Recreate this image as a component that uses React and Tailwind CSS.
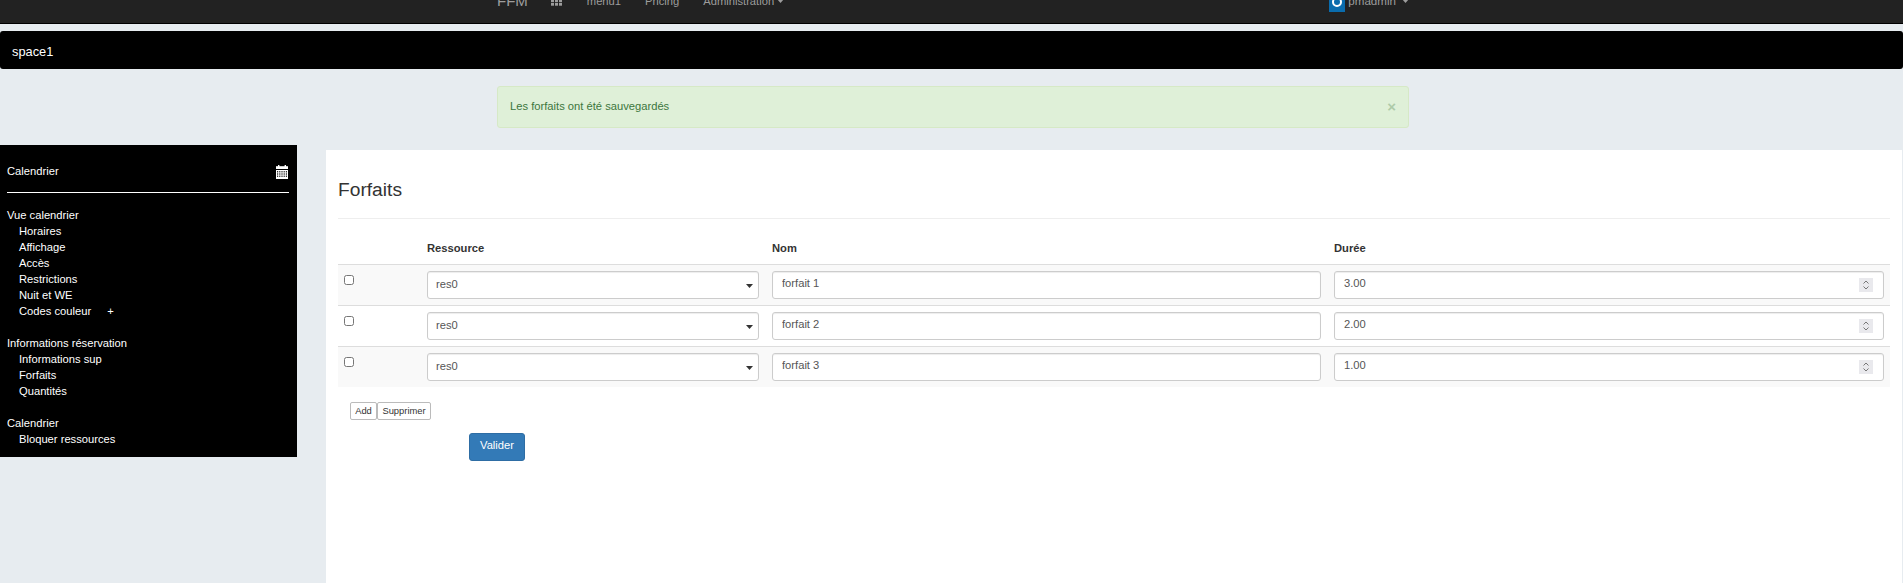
import React from "react";

const font = { fontFamily: '"Liberation Sans", Arial, sans-serif' };

function Caret({ className = "" }) {
  return (
    <svg width="7" height="4" viewBox="0 0 7 4" className={className}>
      <path d="M0 0h7L3.5 4z" fill="currentColor" />
    </svg>
  );
}

function Grid() {
  return (
    <svg width="11" height="10" viewBox="0 0 11 10" fill="#9d9d9d">
      {[0, 4, 8].map((x) =>
        [0, 3.5, 7].map((y) => <rect key={`${x}-${y}`} x={x} y={y} width="3" height="2.7" />)
      )}
    </svg>
  );
}

function CalendarIcon() {
  return (
    <svg width="12" height="14" viewBox="0 0 12 14" fill="#fff">
      <rect x="2" y="0" width="1.4" height="2.5" />
      <rect x="8.6" y="0" width="1.4" height="2.5" />
      <rect x="0" y="1.2" width="12" height="2.8" />
      <path fillRule="evenodd" d="M0 5h12v9H0z" />
      <g fill="#000">
        {[6.2, 8.4, 10.6].map((y) =>
          [1, 3.2, 5.4, 7.6, 9.8].map((x) => <rect key={`${x}-${y}`} x={x} y={y} width="1.2" height="1.2" />)
        )}
      </g>
    </svg>
  );
}

function Spinner() {
  return (
    <span className="absolute right-[11px] top-[7px] flex h-[14px] w-[14px] flex-col items-center justify-center gap-[2px] bg-[#e9e9ed]">
      <svg width="6" height="4" viewBox="0 0 6 4" fill="none" stroke="#777" strokeWidth="1">
        <path d="M.5 3.5 3 1l2.5 2.5" />
      </svg>
      <svg width="6" height="4" viewBox="0 0 6 4" fill="none" stroke="#777" strokeWidth="1">
        <path d="M.5.5 3 3 5.500.5" />
      </svg>
    </span>
  );
}

const inputCls =
  "h-[28px] w-full rounded-[3px] border border-[#ccc] bg-white pb-[3px] pl-[9px] pr-[10px] text-[11.2px] text-[#555] shadow-[inset_0_1px_1px_rgba(0,0,0,0.075)] outline-none";

const rows = [
  { nom: "forfait 1", duree: "3.00", bg: "bg-[#f9f9f9]" },
  { nom: "forfait 2", duree: "2.00", bg: "bg-white" },
  { nom: "forfait 3", duree: "1.00", bg: "bg-[#f9f9f9]" },
];

function SideGroup({ title, items, className = "" }) {
  return (
    <div className={className}>
      <div className="h-4 leading-4">{title}</div>
      {items.map((it) => (
        <div key={it} className="h-4 pl-3 leading-4">
          {it === "Codes couleur" ? (
            <span className="flex">
              <span>Codes couleur</span>
              <span className="ml-[16px]">+</span>
            </span>
          ) : (
            it
          )}
        </div>
      ))}
    </div>
  );
}

export default function App() {
  return (
    <div style={font} className="flex h-[583px] flex-col overflow-hidden bg-[#e7ecf0] text-[11.2px] text-[#333]">
      <nav className="h-[24px] shrink-0 overflow-hidden border-b border-black bg-[#222]">
        <div className="-mt-[6px] ml-[497px] flex h-[14px] w-[912px] items-center text-[#9d9d9d]">
          <span className="text-[15px]">FFM</span>
          <span className="ml-[23px]">
            <Grid />
          </span>
          <span className="ml-[25px]">menu1</span>
          <span className="ml-[24px]">Pricing</span>
          <span className="ml-[24px] flex items-center gap-[3px]">
            Administration
            <Caret />
          </span>
          <span className="ml-auto flex items-center">
            <span className="mt-[6px] flex h-[16px] w-[16px] items-start justify-center bg-[#0a6cad] pt-[1px]">
              <span className="h-[10px] w-[10px] rounded-full border-[2px] border-white" />
            </span>
            <span className="ml-[3px] text-[11.6px]">pmadmin</span>
            <Caret className="ml-[6px]" />
          </span>
        </div>
      </nav>

      <div className="mt-[7px] flex h-[38px] shrink-0 items-center rounded-[3px] bg-black pl-3 pt-[4px] text-[12.8px] text-white">
        space1
      </div>

      <div className="ml-[497px] mt-[17px] flex h-[42px] w-[912px] shrink-0 items-center justify-between rounded-[3px] border border-[#d6e9c6] bg-[#dff0d8] pb-[1px] pl-[12px] pr-3 text-[#3c763d]">
        <span>Les forfaits ont été sauvegardés</span>
        <span className="text-[15px] font-bold leading-none text-[#3c763d] opacity-30">×</span>
      </div>

      <div className="mt-[17px] flex min-h-0 flex-1 items-start">
        <aside className="h-[312px] w-[297px] shrink-0 bg-black pl-[7px] pr-[8px] text-white">
          <div className="flex h-[48px] items-center justify-between border-b border-white pr-[1px] pt-[6px]">
            <span>Calendrier</span>
            <CalendarIcon />
          </div>
          <SideGroup
            className="mt-[14px]"
            title="Vue calendrier"
            items={["Horaires", "Affichage", "Accès", "Restrictions", "Nuit et WE", "Codes couleur"]}
          />
          <SideGroup
            className="mt-4"
            title="Informations réservation"
            items={["Informations sup", "Forfaits", "Quantités"]}
          />
          <SideGroup className="mt-4" title="Calendrier" items={["Bloquer ressources"]} />
        </aside>

        <main className="ml-[29px] mt-[5px] h-[434px] w-[1576px] shrink-0 bg-white pl-3 pr-3">
          <h3 className="flex h-[69px] items-end border-b border-[#eee] pb-[17px] text-[19.2px] font-normal leading-[22px] text-[#333]">
            Forfaits
          </h3>
          <table className="w-[1552px] table-fixed border-collapse">
            <colgroup>
              <col className="w-[82.5px]" />
              <col className="w-[345px]" />
              <col className="w-[562px]" />
              <col className="w-[562.5px]" />
            </colgroup>
            <thead>
              <tr className="h-[45px] border-b border-[#ddd] text-left font-bold">
                <th />
                <th className="px-[6.5px] pt-[14px]">Ressource</th>
                <th className="px-[6.5px] pt-[14px]">Nom</th>
                <th className="px-[6.5px] pt-[14px]">Durée</th>
              </tr>
            </thead>
            <tbody>
              {rows.map((r) => (
                <tr key={r.nom} className={`h-[41px] border-t border-[#ddd] first:border-t-0 ${r.bg}`}>
                  <td className="px-[6px] pb-[10px] align-middle">
                    <input type="checkbox" className="block h-[10px] w-[10px]" />
                  </td>
                  <td className="px-[6.5px] align-middle">
                    <div className="relative">
                      <select defaultValue="res0" className={inputCls + " block appearance-none !pb-0 !pl-[8px]"}>
                        <option>res0</option>
                      </select>
                      <Caret className="pointer-events-none absolute right-[6px] top-[13px] text-[#333]" />
                    </div>
                  </td>
                  <td className="px-[6.5px] align-middle">
                    <input type="text" defaultValue={r.nom} className={inputCls + " block"} />
                  </td>
                  <td className="px-[6.5px] align-middle">
                    <div className="relative">
                      <input type="text" defaultValue={r.duree} className={inputCls + " block"} />
                      <Spinner />
                    </div>
                  </td>
                </tr>
              ))}
            </tbody>
          </table>
          <div className="ml-[12px] mt-[15px] flex">
            <button className="h-[18px] w-[27px] rounded-[2px] border border-[#bbb] bg-white text-[9.4px] leading-[14px] text-[#333]">
              Add
            </button>
            <button className="h-[18px] w-[54px] rounded-[2px] border border-[#bbb] bg-white text-[9.4px] leading-[14px] text-[#333]">
              Supprimer
            </button>
          </div>
          <button className="ml-[131px] mt-[13px] block h-[28px] w-[56px] rounded-[3px] border border-[#2e6da4] bg-[#337ab7] pb-[3px] text-[11.2px] text-white">
            Valider
          </button>
        </main>
      </div>
    </div>
  );
}
